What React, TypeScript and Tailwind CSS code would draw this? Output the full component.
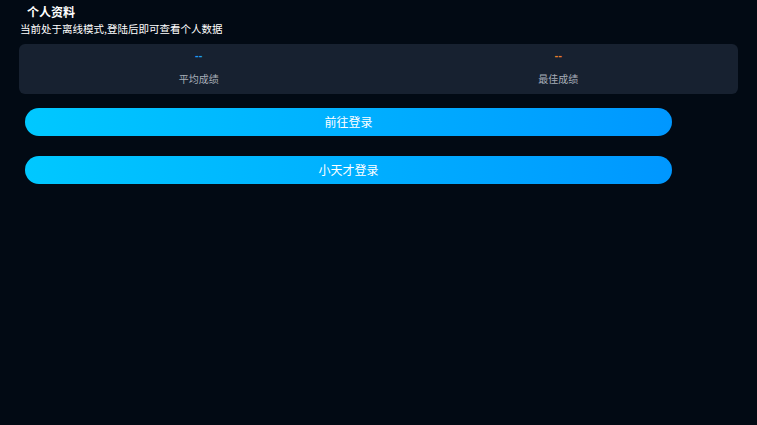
const font = { fontFamily: '"Noto Sans CJK SC", "Noto Sans", sans-serif' };

const stats = [
  { label: "平均成绩", color: "text-[#1e9ef2]" },
  { label: "最佳成绩", color: "text-[#e8802c]" },
];

export default function App() {
  return (
    <div className="h-[425px] w-[757px] bg-[#020a14] pt-[1px] text-white" style={font}>
      <div className="pl-[27px] pt-[2px] text-[12px] font-bold leading-[17px]">个人资料</div>
      <div className="pl-[20px] text-[10.5px] leading-[17px]">当前处于离线模式,登陆后即可查看个人数据</div>
      <div className="mx-[19px] mt-[7px] grid h-[50px] grid-cols-2 rounded-[6px] bg-[#172130]">
        {stats.map((s) => (
          <div key={s.label} className="flex flex-col items-center">
            <div
              className={`mt-[4px] text-[11px] font-bold leading-[14px] ${s.color}`}
              style={{ fontFamily: '"Liberation Sans", sans-serif' }}
            >
              --
            </div>
            <div className="mt-[10px] text-[10px] leading-[14px] text-[#a7aeb8]">{s.label}</div>
          </div>
        ))}
      </div>
      <div className="ml-[25px] mt-[14px] flex w-[647px] flex-col gap-[20px]">
        {["前往登录", "小天才登录"].map((t) => (
          <button
            key={t}
            className="h-[28px] w-full rounded-full bg-gradient-to-r from-[#00c8ff] to-[#0097ff] text-[12px] leading-[28px] text-white"
          >
            {t}
          </button>
        ))}
      </div>
    </div>
  );
}
